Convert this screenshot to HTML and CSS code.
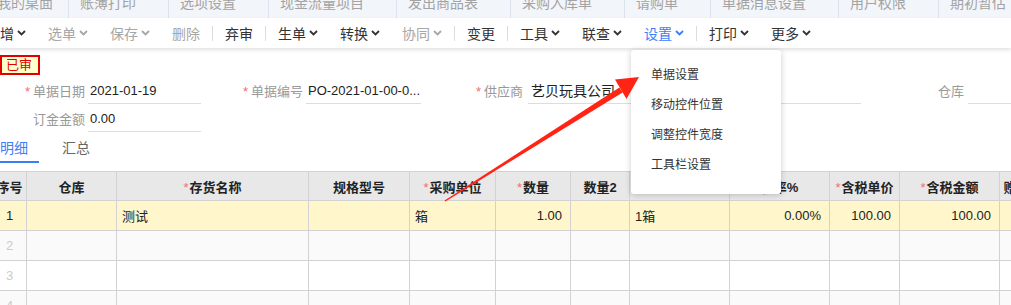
FILE: index.html
```html
<!DOCTYPE html>
<html>
  <head>
    <title>采购订单</title>
    <meta charset="utf-8" />
    <link rel="stylesheet" href="styles.css">
  </head>
  <body>
    <div class="page">
      <div class="tabstrip">
        <span class="tab first">我的桌面</span>
        <span class="tab">账薄打印</span>
        <span class="tab">选项设置</span>
        <span class="tab">现金流量项目</span>
        <span class="tab">发出商品表</span>
        <span class="tab">采购入库单</span>
        <span class="tab">请购单</span>
        <span class="tab">单据消息设置</span>
        <span class="tab">用户权限</span>
        <span class="tab">期初暂估</span>
      </div>

      <div class="toolbar">
        <a class="tool">新增<svg class="chev" viewBox="0 0 9 6"><polyline points="1,1 4.5,4.5 8,1" /></svg></a>
        <a class="tool off">选单<svg class="chev" viewBox="0 0 9 6"><polyline points="1,1 4.5,4.5 8,1" /></svg></a>
        <a class="tool off">保存<svg class="chev" viewBox="0 0 9 6"><polyline points="1,1 4.5,4.5 8,1" /></svg></a>
        <a class="tool off">删除</a>
        <span class="sep"></span>
        <a class="tool">弃审</a>
        <span class="sep"></span>
        <a class="tool">生单<svg class="chev" viewBox="0 0 9 6"><polyline points="1,1 4.5,4.5 8,1" /></svg></a>
        <a class="tool">转换<svg class="chev" viewBox="0 0 9 6"><polyline points="1,1 4.5,4.5 8,1" /></svg></a>
        <a class="tool off">协同<svg class="chev" viewBox="0 0 9 6"><polyline points="1,1 4.5,4.5 8,1" /></svg></a>
        <span class="sep"></span>
        <a class="tool">变更</a>
        <span class="sep"></span>
        <a class="tool">工具<svg class="chev" viewBox="0 0 9 6"><polyline points="1,1 4.5,4.5 8,1" /></svg></a>
        <a class="tool">联查<svg class="chev" viewBox="0 0 9 6"><polyline points="1,1 4.5,4.5 8,1" /></svg></a>
        <a class="tool active">设置<svg class="chev" viewBox="0 0 9 6"><polyline points="1,1 4.5,4.5 8,1" /></svg></a>
        <span class="sep"></span>
        <a class="tool">打印<svg class="chev" viewBox="0 0 9 6"><polyline points="1,1 4.5,4.5 8,1" /></svg></a>
        <a class="tool">更多<svg class="chev" viewBox="0 0 9 6"><polyline points="1,1 4.5,4.5 8,1" /></svg></a>
      </div>

      <div class="status">
        <span class="badge">已审</span>
      </div>

      <div class="form">
        <div class="form-row">
          <div class="field f1"><label><i>*</i>单据日期</label><span class="value">2021-01-19</span></div>
          <div class="field f2"><label><i>*</i>单据编号</label><span class="value">PO-2021-01-00-0...</span></div>
          <div class="field f3"><label><i>*</i>供应商</label><span class="value">艺贝玩具公司</span></div>
          <div class="field f4"><label>仓库</label><span class="value"></span></div>
        </div>
        <div class="form-row">
          <div class="field f1"><label>订金金额</label><span class="value">0.00</span></div>
        </div>
      </div>

      <div class="subtabs">
        <span class="subtab on">明细</span>
        <span class="subtab">汇总</span>
      </div>

      <div class="grid-wrap">
        <table class="grid">
          <colgroup>
            <col style="width:34px"><col style="width:90px"><col style="width:192px"><col style="width:101px">
            <col style="width:86px"><col style="width:75px"><col style="width:59px"><col style="width:100px">
            <col style="width:100px"><col style="width:70px"><col style="width:100px"><col style="width:34px">
          </colgroup>
          <thead>
            <tr>
              <th>序号</th><th>仓库</th><th><i>*</i>存货名称</th><th>规格型号</th>
              <th><i>*</i>采购单位</th><th><i>*</i>数量</th><th>数量2</th><th>辅助数量</th>
              <th>税率%</th><th><i>*</i>含税单价</th><th><i>*</i>含税金额</th><th>赠品</th>
            </tr>
          </thead>
          <tbody>
            <tr class="current">
              <td class="no">1</td><td></td><td>测试</td><td></td>
              <td>箱</td><td class="num">1.00</td><td></td><td>1箱</td>
              <td class="num">0.00%</td><td class="num">100.00</td><td class="num">100.00</td><td></td>
            </tr>
            <tr class="odd">
              <td class="no">2</td><td></td><td></td><td></td><td></td><td></td><td></td><td></td><td></td><td></td><td></td><td></td>
            </tr>
            <tr>
              <td class="no">3</td><td></td><td></td><td></td><td></td><td></td><td></td><td></td><td></td><td></td><td></td><td></td>
            </tr>
            <tr class="odd">
              <td class="no">4</td><td></td><td></td><td></td><td></td><td></td><td></td><td></td><td></td><td></td><td></td><td></td>
            </tr>
          </tbody>
        </table>
      </div>

      <ul class="dropdown">
        <li>单据设置</li>
        <li>移动控件位置</li>
        <li>调整控件宽度</li>
        <li>工具栏设置</li>
      </ul>

      <svg class="arrow" viewBox="0 0 1011 305" width="1011" height="305">
        <polygon points="444.6,200.4 445.4,201.6 622.6,92.5 619.4,87.5" />
        <polygon points="639,77 615,79.5 626.5,99" />
      </svg>
    </div>
  </body>
</html>
```

FILE: styles.css
```css
body {
    margin: 0;
    background: #fff;
    font-family: "Liberation Sans", "Noto Sans CJK SC", sans-serif;
    color: #222; }

div.page {
    position: relative;
    width: 1011px;
    height: 305px;
    overflow: hidden; }

/* top open-page tabs, scrolled up a bit */
div.tabstrip {
    display: flex;
    height: 18px;
    background: #f2f5fa;
    font-size: 14px;
    color: #a3a3a3;
    margin-left: -3px;
    overflow: hidden; }
div.tabstrip span.tab {
    flex: none;
    line-height: 12px;
    margin-top: -3px;
    padding: 0 32px 0 11px;
    border-left: 1px solid #dde3ec; }
div.tabstrip span.tab.first {
    border-left: none;
    padding: 0 15px 0 0; }

/* toolbar */
div.toolbar {
    position: relative;
    display: flex;
    align-items: center;
    height: 30px;
    margin-left: -25px;
    font-size: 14px;
    color: #333;
    background: #fff;
    box-shadow: 0 2px 4px rgba(0, 0, 0, 0.12);
    z-index: 1; }
div.toolbar a.tool {
    display: flex;
    align-items: center;
    padding: 0 11px;
    white-space: nowrap; }
div.toolbar a.tool.off {
    color: #a6a6a6; }
div.toolbar a.tool.active {
    color: #3d7ef5; }
div.toolbar svg.chev {
    width: 9px;
    height: 6px;
    margin-left: 3px;
    fill: none;
    stroke: currentColor;
    stroke-width: 1.8; }
div.toolbar span.sep {
    width: 1px;
    height: 15px;
    margin: 0 1px;
    background: #dcdcdc; }

/* status badge */
div.status {
    padding-top: 7px;
    height: 20px; }
span.badge {
    display: inline-block;
    box-sizing: border-box;
    height: 20px;
    width: 40px;
    padding-left: 4px;
    border: 2px solid #e00000;
    background: #ffffcc;
    color: #e00000;
    font-size: 13px;
    line-height: 16px; }

/* header form */
div.form {
    margin-top: 4px;
    font-size: 13px; }
div.form-row {
    display: flex;
    height: 28px; }
div.field {
    display: flex;
    flex: none; }
div.field label {
    flex: none;
    text-align: right;
    color: #999;
    line-height: 25px; }
div.field label i {
    font-style: normal;
    color: #f56c6c;
    margin-right: 3px; }
div.field span.value {
    flex: none;
    box-sizing: border-box;
    height: 25px;
    line-height: 24px;
    padding-left: 2px;
    border-bottom: 1px solid #ddd;
    color: #222;
    white-space: nowrap; }
div.f1 label { width: 85px; }
div.f1 span.value { width: 113px; margin-left: 3px; }
div.f2 label { width: 102px; }
div.f2 span.value { width: 115px; margin-left: 3px; }
div.f3 label { width: 102px; }
div.f3 span.value { width: 333px; margin-left: 5px; padding-left: 3px; font-size: 14px; }
div.f4 label { width: 103px; }
div.f4 span.value { width: 100px; margin-left: 4px; }

/* detail / summary tabs */
div.subtabs {
    display: flex;
    margin-left: -11px;
    height: 28px;
    font-size: 14px; }
div.subtabs span.subtab {
    padding: 0 11px;
    line-height: 26px;
    margin-right: 12px;
    color: #666;
    border-bottom: 2px solid transparent; }
div.subtabs span.subtab.on {
    color: #3d7ef5;
    border-bottom-color: #3d7ef5; }

/* detail grid */
div.grid-wrap {
    margin-top: 8px;
    margin-left: -8px; }
table.grid {
    table-layout: fixed;
    width: 1041px;
    border-collapse: collapse;
    font-size: 13px; }
table.grid th {
    height: 28px;
    padding: 0;
    background: #e8e8e8;
    border: 1px solid #d2d2d2;
    font-weight: bold;
    color: #222;
    white-space: nowrap;
    overflow: hidden; }
table.grid th i {
    font-style: normal;
    font-weight: normal;
    color: #f56c6c;
    margin-right: 1px; }
table.grid td {
    height: 29px;
    padding: 0 5px;
    border: 1px solid #d2d2d2;
    white-space: nowrap;
    overflow: hidden; }
table.grid td.no {
    text-align: center;
    color: #ccc;
    padding: 0; }
table.grid td.num {
    text-align: right;
    padding-right: 8px; }
table.grid tr.current td {
    background: #fff6cb; }
table.grid tr.current td.no {
    color: #222; }
table.grid tr.odd td {
    background: #fafafa; }

/* settings menu, opened from the toolbar */
ul.dropdown {
    position: absolute;
    left: 631px;
    top: 50px;
    z-index: 2;
    width: 150px;
    margin: 0;
    padding: 10px 0 14px;
    list-style: none;
    background: #fff;
    border-radius: 3px;
    box-shadow: 0 1px 6px rgba(0, 0, 0, 0.2);
    font-size: 12px;
    color: #333; }
ul.dropdown li {
    height: 30px;
    line-height: 30px;
    padding-left: 20px; }

svg.arrow {
    position: absolute;
    left: 0;
    top: 0;
    z-index: 3;
    pointer-events: none;
    fill: #ff2414; }
```
